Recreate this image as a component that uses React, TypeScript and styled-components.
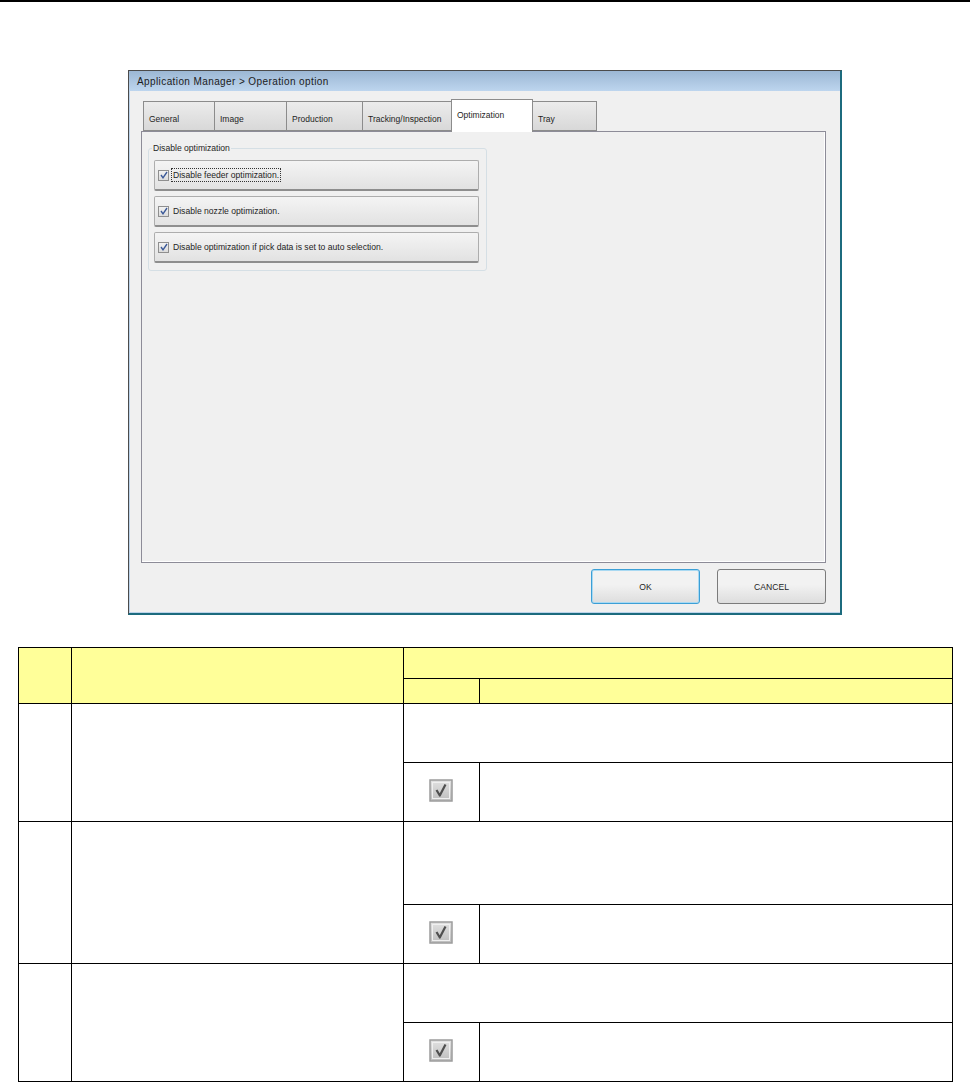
import React from 'react';
import styled, { createGlobalStyle } from 'styled-components';

const GlobalStyle = createGlobalStyle`
  html, body {
    margin: 0;
    padding: 0;
    background: #ffffff;
  }
  body {
    font-family: 'Liberation Sans', Arial, sans-serif;
  }
`;

const Page = styled.div`
  width: 970px;
  display: flex;
  flex-direction: column;
  align-items: center;
`;

const TopRule = styled.div`
  align-self: stretch;
  height: 2px;
  background: #000;
`;

const Window = styled.div`
  margin-top: 68px;
  width: 714px;
  height: 545px;
  box-sizing: border-box;
  border: 1px solid #4b4b4b;
  border-right: 2px solid #1c6b7e;
  border-bottom: 2px solid #1c6b7e;
  background: #f0f0f0;
  display: flex;
  flex-direction: column;
  font-family: 'Liberation Sans', Arial, sans-serif;
  color: #1e1e1e;
`;

const TitleBar = styled.div`
  height: 20px;
  flex-shrink: 0;
  display: flex;
  align-items: center;
  padding-left: 8px;
  font-size: 10px;
  letter-spacing: 0.4px;
  color: #1b1b1b;
  background: linear-gradient(#9cb7d4, #bdd5ee);
`;

const Body = styled.div`
  flex: 1;
  display: flex;
  flex-direction: column;
  padding: 8px 14px 8px 11px;
  border-left: 1px solid #bcd3ea;
  border-bottom: 1px solid #bcd3ea;
`;

const TabStrip = styled.div`
  display: flex;
  align-items: flex-end;
  height: 32px;
  padding-left: 2px;
  position: relative;
  z-index: 1;
`;

const Tab = styled.div<{ $w: number; $active?: boolean }>`
  width: ${(p) => p.$w}px;
  box-sizing: border-box;
  height: ${(p) => (p.$active ? 33 : 30)}px;
  margin-bottom: ${(p) => (p.$active ? -1 : 0)}px;
  border: 1px solid #8c8c8c;
  border-bottom: ${(p) => (p.$active ? 'none' : '1px solid #8c8c8c')};
  margin-right: -1px;
  background: ${(p) =>
    p.$active ? '#ffffff' : 'linear-gradient(#ececec, #d8d8d8)'};
  font-size: 8.5px;
  padding: ${(p) => (p.$active ? '10px 5px 0' : '12px 5px 0')};
  white-space: nowrap;
  color: #1e1e1e;
`;

const Panel = styled.div`
  flex: 1;
  border: 1px solid #8d8c98;
  box-shadow: inset -1px -1px 0 #ffffff;
  background: #f0f0f0;
  padding: 11px 6px;
`;

const GroupBox = styled.fieldset`
  margin: 0;
  width: 339px;
  height: 128px;
  box-sizing: border-box;
  border: 1px solid #d5dfe5;
  border-radius: 3px;
  padding: 7px 7px 0 5px;
  display: flex;
  flex-direction: column;
  gap: 5px;
`;

const Legend = styled.legend`
  font-size: 8.6px;
  padding: 0 1px;
  margin-left: -2px;
  color: #1e1e1e;
`;

const OptionButton = styled.div`
  height: 31px;
  box-sizing: border-box;
  border: 1px solid #adadad;
  border-bottom: 2px solid #8e8e8e;
  border-radius: 2px;
  background: linear-gradient(#f4f4f4, #e2e2e2);
  display: flex;
  align-items: center;
  padding-left: 3px;
  gap: 3px;
  font-size: 8.6px;
`;

const SmallCheck = styled.span`
  width: 9px;
  height: 9px;
  border: 1px solid #8f8f8f;
  background: linear-gradient(#f2f2f2, #dcdcdc);
  display: flex;
  align-items: center;
  justify-content: center;
`;

const OptionText = styled.span<{ $focus?: boolean }>`
  padding: 1px 1px;
  outline: ${(p) => (p.$focus ? '1px dotted #333' : 'none')};
`;

const ButtonBar = styled.div`
  display: flex;
  justify-content: flex-end;
  gap: 17px;
  padding-top: 6px;
`;

const DialogButton = styled.div<{ $default?: boolean }>`
  width: 109px;
  height: 35px;
  box-sizing: border-box;
  border: 1px solid ${(p) => (p.$default ? '#3c9fd6' : '#7b7b7b')};
  border-radius: 3px;
  box-shadow: ${(p) => (p.$default ? 'inset 0 0 0 1px #a9d9f2' : 'none')};
  background: linear-gradient(#f2f2f2 45%, #dddddd);
  display: flex;
  align-items: center;
  justify-content: center;
  font-size: 8.6px;
  color: #1e1e1e;
`;

const Table = styled.table`
  margin-top: 32px;
  width: 934px;
  border-collapse: collapse;
  table-layout: fixed;
`;

const Cell = styled.td<{ $h?: number; $head?: boolean }>`
  border: 1.5px solid #000;
  height: ${(p) => p.$h ?? 'auto'}px;
  background: ${(p) => (p.$head ? '#ffff99' : '#ffffff')};
  padding: 0;
  text-align: center;
  vertical-align: middle;
  box-sizing: border-box;
`;

const BigCheck = () => (
  <svg width="24" height="23" viewBox="0 0 24 23">
    <defs>
      <linearGradient id="bc" x1="0" y1="0" x2="0" y2="1">
        <stop offset="0" stopColor="#e2e2e2" />
        <stop offset="1" stopColor="#bdbdbd" />
      </linearGradient>
    </defs>
    <rect x="1" y="1" width="22" height="21" fill="url(#bc)" stroke="#9c9c9c" strokeWidth="1.5" />
    <rect x="3.5" y="3.5" width="17" height="16" fill="none" stroke="#f0f0f0" strokeWidth="1" />
    <path d="M7.5 11 L10.8 16.5 L16.5 5.5" fill="none" stroke="#4f4f4f" strokeWidth="2.2" strokeLinejoin="round" />
  </svg>
);

const TinyTick = () => (
  <svg width="8" height="8" viewBox="0 0 8 8">
    <path d="M1 4 L3 6.8 L7 1" fill="none" stroke="#3b5998" strokeWidth="1.4" />
  </svg>
);

const tabs = [
  { label: 'General', w: 72 },
  { label: 'Image', w: 73 },
  { label: 'Production', w: 77 },
  { label: 'Tracking/Inspection', w: 90 },
  { label: 'Optimization', w: 82, active: true },
  { label: 'Tray', w: 65 },
];

const options = [
  { text: 'Disable feeder optimization.', focus: true },
  { text: 'Disable nozzle optimization.' },
  { text: 'Disable optimization if pick data is set to auto selection.' },
];

const rows = [
  { top: 59, bottom: 59 },
  { top: 83, bottom: 59 },
  { top: 59, bottom: 59 },
];

export default function App() {
  return (
    <Page>
      <GlobalStyle />
      <TopRule />
      <Window>
        <TitleBar>Application Manager &gt; Operation option</TitleBar>
        <Body>
          <TabStrip>
            {tabs.map((t) => (
              <Tab key={t.label} $w={t.w} $active={t.active}>
                {t.label}
              </Tab>
            ))}
          </TabStrip>
          <Panel>
            <GroupBox>
              <Legend>Disable optimization</Legend>
              {options.map((o) => (
                <OptionButton key={o.text}>
                  <SmallCheck>
                    <TinyTick />
                  </SmallCheck>
                  <OptionText $focus={o.focus}>{o.text}</OptionText>
                </OptionButton>
              ))}
            </GroupBox>
          </Panel>
          <ButtonBar>
            <DialogButton $default>OK</DialogButton>
            <DialogButton>CANCEL</DialogButton>
          </ButtonBar>
        </Body>
      </Window>
      <Table>
        <colgroup>
          <col style={{ width: 53 }} />
          <col style={{ width: 332 }} />
          <col style={{ width: 76 }} />
          <col style={{ width: 473 }} />
        </colgroup>
        <tbody>
          <tr>
            <Cell $head rowSpan={2} />
            <Cell $head rowSpan={2} />
            <Cell $head colSpan={2} $h={31} />
          </tr>
          <tr>
            <Cell $head $h={25} />
            <Cell $head />
          </tr>
          {rows.map((r, i) => (
            <React.Fragment key={i}>
              <tr>
                <Cell rowSpan={2} />
                <Cell rowSpan={2} />
                <Cell colSpan={2} $h={r.top} />
              </tr>
              <tr>
                <Cell $h={r.bottom}>
                  <BigCheck />
                </Cell>
                <Cell />
              </tr>
            </React.Fragment>
          ))}
        </tbody>
      </Table>
    </Page>
  );
}
